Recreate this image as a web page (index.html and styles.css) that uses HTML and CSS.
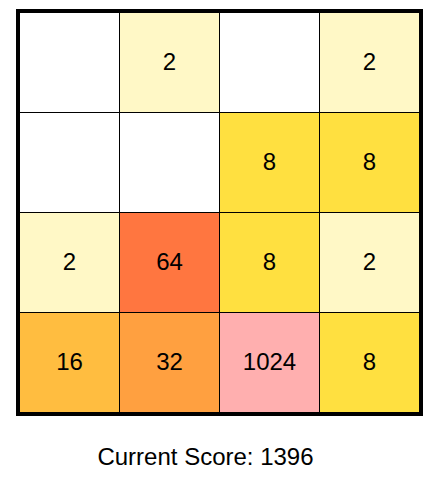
FILE: index.html
```html
<!DOCTYPE html>
<html lang="en">
<head>
<meta charset="utf-8">
<title>2048</title>
<link rel="stylesheet" href="styles.css">
</head>
<body>
<main class="game">
<table class="board" aria-label="Game board">
<tbody>
<tr><td></td><td class="t2">2</td><td></td><td class="t2">2</td></tr>
<tr><td></td><td></td><td class="t8">8</td><td class="t8">8</td></tr>
<tr><td class="t2">2</td><td class="t64">64</td><td class="t8">8</td><td class="t2">2</td></tr>
<tr><td class="t16">16</td><td class="t32">32</td><td class="t1024">1024</td><td class="t8">8</td></tr>
</tbody>
</table>
<p class="score">Current Score: 1396</p>
</main>
</body>
</html>
```
FILE: styles.css
```css
body {
  margin: 0;
  background: #fff;
  color: #000;
  font: 24px/28px "Liberation Sans", Arial, sans-serif;
}

.game {
  padding: 9px 23px 0 16px;
  text-align: center;
}

/* The black table background shows through the spacing as grid lines. */
.board {
  width: 100%;
  table-layout: fixed;
  border: 3px solid #000;
  border-spacing: 1px;
  background: #000;
}

.board td {
  height: 97px;
  padding: 0 0 2px;
  background: #fff;
}

.board .t2 { background: #fff8c6; }
.board .t8 { background: #ffe040; }
.board .t16 { background: #ffbd40; }
.board .t32 { background: #ffa040; }
.board .t64 { background: #ff7640; }
.board .t1024 { background: #ffafaf; }

.score {
  margin: 27px 28px 0 0;
}
```
